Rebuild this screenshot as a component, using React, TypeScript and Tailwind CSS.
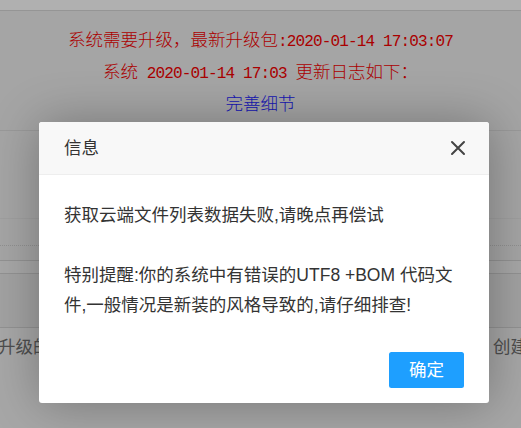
import React from 'react'

const serif = { fontFamily: '"Liberation Serif", "Noto Sans CJK SC", serif' }

// half-width latin parts of the notice, drawn at the width of a song-ti digit
const Num = ({ children }: { children: React.ReactNode }) => (
  <span className="whitespace-pre font-['Liberation_Mono',monospace] text-[16px] tracking-[-0.85px]">{children}</span>
)

const App = () => {
  return (
    <div
      className="relative h-[428px] w-[521px] overflow-hidden bg-[#f0f0f0] text-[17.5px]"
      style={{ fontFamily: '"Liberation Sans", "Noto Sans CJK SC", sans-serif' }}
    >
      {/* page behind the shade */}
      <div className="h-[11px] border-b border-[#d6d6d6] bg-[#fdfdfd]" />
      <div
        className="flex h-[120px] flex-col items-center border-b border-[#dcdcdc] bg-[#ececec] pt-[14px] font-light leading-[30px]"
        style={serif}
      >
        <div className="text-[#f40000]">
          系统需要升级，最新升级包<Num>:2020-01-14 17:03:07</Num>
        </div>
        <div className="text-[#f40000]">
          系统<Num> 2020-01-14 17:03 </Num>更新日志如下：
        </div>
        <div className="text-[#2424ff]">完善细节</div>
      </div>
      <div className="h-[88px] border-b border-[#e4e4e4] bg-[#ececec]" />
      <div className="h-[27px] border-b border-dotted border-[#cfcfcf] bg-[#ececec]" />
      <div className="h-[15px] border-b border-[#d2d2d2] bg-[#ececec]" />
      <div className="h-[13px] border-b border-[#d2d2d2] bg-[#efefef]" />
      <div className="h-[54px] border-b border-[#d2d2d2] bg-[#e9e9e9]" />
      <div className="flex items-center justify-between whitespace-nowrap pt-[4px] leading-[30px] text-[#707070]">
        <span className="-ml-[2px]">升级的</span>
        <span className="-mr-[42px]">创建任务</span>
      </div>

      {/* shade */}
      <div className="absolute inset-0 bg-black/30" />

      {/* dialog */}
      <div className="absolute left-[39px] top-[122px] w-[450px] rounded-[3px] bg-white shadow-[1px_1px_50px_rgba(0,0,0,0.3)]">
        <div className="flex h-[53px] items-center justify-between rounded-t-[3px] border-b border-[#eeeeee] bg-[#f8f8f8] pl-[25px] pr-[23px] text-[#333]">
          <span>信息</span>
          <svg width="16" height="16" viewBox="0 0 16 16" className="text-[#444]">
            <path d="M2 2L14 14M14 2L2 14" stroke="currentColor" strokeWidth="2" strokeLinecap="round" />
          </svg>
        </div>
        <div className="p-[25px] leading-[30px] text-[#333]">
          获取云端文件列表数据失败,请晚点再偿试
          <br />
          <br />
          特别提醒:你的系统中有错误的UTF8 +BOM 代码文件,一般情况是新装的风格导致的,请仔细排查!
        </div>
        <div className="flex justify-end px-[25px] pb-[15px] pt-[7px]">
          <button className="h-[36px] rounded-[2.5px] bg-[#1e9fff] px-[20px] text-white">确定</button>
        </div>
      </div>
    </div>
  )
}

export default App
